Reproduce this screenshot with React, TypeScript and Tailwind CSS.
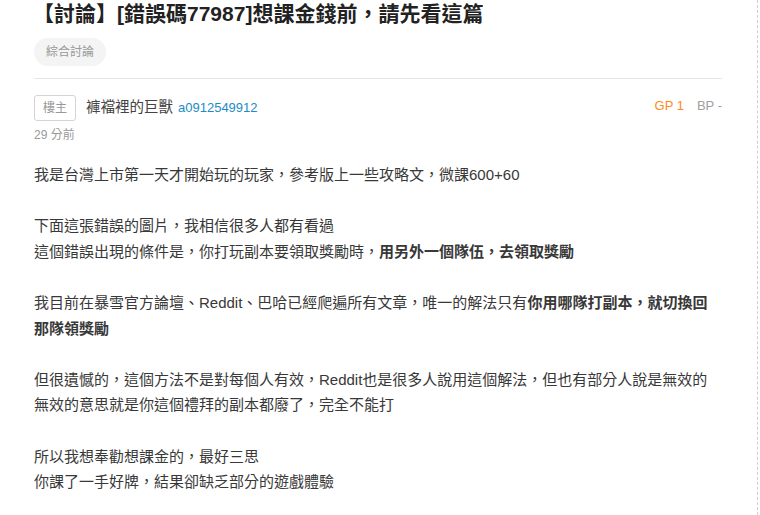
import React from 'react';

const font = { fontFamily: '"Liberation Sans", "Noto Sans CJK TC", sans-serif' };

const Post = () => {
    return (
        <div className="w-[758px] min-h-[515px] bg-white border-r border-dashed border-[#cfcfcf]" style={font}>
            <div className="pl-[33px] pr-[35px]">
                {/* Title */}
                <h1 className="text-[21px] leading-[28px] font-bold text-[#222]">
                    【討論】[錯誤碼77987]想課金錢前，請先看這篇
                </h1>

                {/* Board tag */}
                <div className="mt-[10px] pl-px">
                    <span className="inline-flex items-center h-[28px] px-[12px] rounded-full bg-[#f4f4f4] text-[12px] text-[#999]">綜合討論</span>
                </div>

                <div className="mt-[12px] ml-px border-t border-[#e6e6e6]" />

                {/* Author row */}
                <div className="flex items-center justify-between mt-[16px] pl-px">
                    <div className="flex items-center">
                        <span className="inline-flex items-center justify-center w-[42px] h-[26px] border border-[#d4d4d4] rounded-[3px] text-[12px] text-[#999]">樓主</span>
                        <span className="ml-[10px] text-[14.5px] text-[#444]">褲襠裡的巨獸</span>
                        <span className="ml-[5px] text-[13px] text-[#1b8bc4]">a0912549912</span>
                    </div>
                    <div className="flex items-center text-[13px] -mt-[4px]">
                        <span className="text-[#ff8a1c]">GP 1</span>
                        <span className="ml-[13px] text-[#a0a0a0]">BP -</span>
                    </div>
                </div>
                <div className="mt-[5px] pl-px text-[12px] text-[#999]">29 分前</div>

                {/* Body */}
                <div className="mt-[18px] pl-px text-[15px] leading-[25.6px] text-[#383838]">
                    <p>我是台灣上市第一天才開始玩的玩家，參考版上一些攻略文，微課600+60</p>
                    <br />
                    <p>下面這張錯誤的圖片，我相信很多人都有看過</p>
                    <p>這個錯誤出現的條件是，你打玩副本要領取獎勵時，<b className="font-semibold">用另外一個隊伍，去領取獎勵</b></p>
                    <br />
                    <p>我目前在暴雪官方論壇、Reddit、巴哈已經爬遍所有文章，唯一的解法只有<b className="font-semibold">你用哪隊打副本，就切換回<br />那隊領獎勵</b></p>
                    <br />
                    <p>但很遺憾的，這個方法不是對每個人有效，Reddit也是很多人說用這個解法，但也有部分人說是無效的<br />無效的意思就是你這個禮拜的副本都廢了，完全不能打</p>
                    <br />
                    <p>所以我想奉勸想課金的，最好三思</p>
                    <p>你課了一手好牌，結果卻缺乏部分的遊戲體驗</p>
                </div>
            </div>
        </div>
    );
};

export default function App() {
    return <Post />;
}
